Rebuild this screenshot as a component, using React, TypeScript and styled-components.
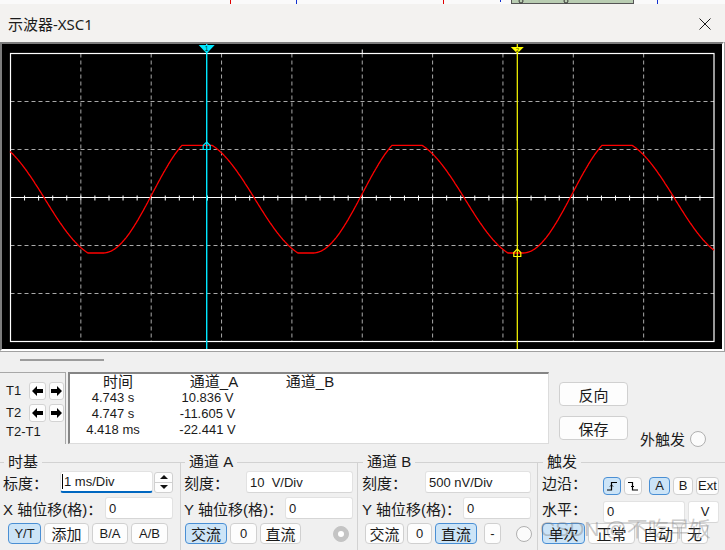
import React from 'react';
import styled, { createGlobalStyle } from 'styled-components';

const ui = `"Liberation Sans", "Noto Sans CJK SC", sans-serif`;

const GlobalStyle = createGlobalStyle`
  html, body {
    margin: 0;
    padding: 0;
    background: #f0f0f0;
  }
  body {
    font-family: ${ui};
    color: #1a1a1a;
  }
`;

const Page = styled.div`
  position: relative;
  width: 725px;
  height: 550px;
  overflow: hidden;
  display: flex;
  flex-direction: column;
  background: #f0f0f0;
`;

const StripSvg = styled.svg`
  display: block;
  flex-shrink: 0;
`;

const TitleBar = styled.div`
  height: 38px;
  flex-shrink: 0;
  display: flex;
  align-items: center;
  justify-content: space-between;
  padding: 0 14px 0 8px;
  background: #f3f2f0;
`;

const Title = styled.span`
  font-family: "Noto Sans", "Noto Sans CJK SC", sans-serif;
  font-size: 15px;
  color: #1b1b1b;
`;

const CloseSvg = styled.svg`
  display: block;
  margin-top: 2px;
`;

const ScopeOuter = styled.div`
  flex-shrink: 0;
  border-right: 1px solid #a0a0a0;
  border-bottom: 1px solid #a0a0a0;
`;

const ScopeInner = styled.div`
  height: 305px;
  border: 2px solid;
  border-color: #7c7c7c #ffffff #ffffff #7c7c7c;
  background: #000;
`;

const ScopeSvg = styled.svg`
  display: block;
`;

const Panel = styled.div`
  flex: 1;
  display: flex;
  flex-direction: column;
`;

const ScrollRow = styled.div`
  height: 20px;
  box-sizing: border-box;
  padding: 7px 0 0 20px;
`;

const ScrollThumb = styled.div`
  width: 84px;
  height: 2px;
  background: #9c9c9c;
`;

const CursorRow = styled.div`
  height: 72px;
  display: flex;
`;

const CursorKeys = styled.div`
  width: 66px;
  box-sizing: border-box;
  border-top: 1px solid #a8a8a8;
  border-right: 1px solid #a8a8a8;
  padding: 9px 0 0 6px;
  display: grid;
  grid-template-columns: 20px 17px 15px;
  grid-template-rows: 18px 17px 14px;
  column-gap: 3px;
  row-gap: 4px;
  align-items: center;
`;

const KeyLabel = styled.span<{ $span?: boolean }>`
  font-size: 13px;
  line-height: 14px;
  white-space: nowrap;
  grid-column: ${(p) => (p.$span ? '1 / -1' : 'auto')};
`;

const KeyButton = styled.button`
  height: 18px;
  padding: 0;
  box-sizing: border-box;
  border: 1px solid #d3d3d3;
  border-radius: 3px;
  background: #fdfdfd;
  display: flex;
  align-items: center;
  justify-content: center;
`;

const Readout = styled.div`
  width: 481px;
  margin-left: 2px;
  box-sizing: border-box;
  border-style: solid;
  border-width: 2px 1px 1px 2px;
  border-color: #858585 #dcdcdc #dcdcdc #858585;
  background: #fff;
  display: grid;
  grid-template-columns: 96px 96px 96px;
  grid-auto-rows: 16px;
  align-content: start;
`;

const HeadCell = styled.div`
  font-size: 15px;
  line-height: 16px;
  text-align: center;
  white-space: nowrap;
`;

const ValueCell = styled.div<{ $pr: number }>`
  font-size: 13px;
  line-height: 16px;
  text-align: center;
  padding-right: ${(p) => p.$pr}px;
  white-space: nowrap;
`;

const SideButtons = styled.div`
  margin-left: 10px;
  padding-top: 10px;
  display: flex;
  flex-direction: column;
  gap: 10px;
`;

const ExtTrigger = styled.div`
  margin-left: 12px;
  margin-bottom: -5px;
  align-self: flex-end;
  display: flex;
  align-items: center;
  gap: 5px;
  font-size: 15px;
`;

const Groups = styled.div`
  display: flex;
  margin-top: 9px;
  margin-left: -1px;
  height: 110px;
`;

const Group = styled.fieldset<{ $w: number; $pl: number }>`
  width: ${(p) => p.$w}px;
  flex-shrink: 0;
  min-width: 0;
  box-sizing: border-box;
  margin: 0;
  padding: 0 0 0 ${(p) => p.$pl}px;
  border: none;
  border-top: 1px solid #d2d2d2;
  border-left: 1px solid #d2d2d2;
`;

const Legend = styled.legend`
  font-size: 15px;
  line-height: 18px;
  padding: 0 4px;
  margin-left: 1px;
`;

const FormRow = styled.div`
  display: flex;
  align-items: center;
  height: 22px;
  margin-bottom: 4px;
`;

const Label = styled.span<{ $w: number }>`
  width: ${(p) => p.$w}px;
  flex-shrink: 0;
  font-size: 15px;
  white-space: nowrap;
`;

const Field = styled.div<{ $w: number; $focused?: boolean; $center?: boolean }>`
  width: ${(p) => p.$w}px;
  height: 22px;
  flex-shrink: 0;
  box-sizing: border-box;
  background: #fff;
  border: 1px solid #e2e2e2;
  border-bottom: ${(p) => (p.$focused ? '2px solid #0067c0' : '1px solid #d6d6d6')};
  border-radius: 3px;
  padding-left: ${(p) => (p.$focused ? 1 : 3)}px;
  font-size: 13px;
  display: flex;
  align-items: center;
  justify-content: ${(p) => (p.$center ? 'center' : 'flex-start')};
  white-space: pre;
`;

const Caret = styled.span`
  width: 1px;
  height: 15px;
  margin-right: 1px;
  background: #000;
`;

const Spinner = styled.div`
  margin-left: 1px;
  width: 19px;
  height: 21px;
  box-sizing: border-box;
  border: 1px solid #d0d0d0;
  border-radius: 3px;
  background: #fdfdfd;
  display: flex;
  flex-direction: column;
`;

const SpinHalf = styled.div<{ $down?: boolean }>`
  flex: 1;
  display: flex;
  align-items: center;
  justify-content: center;
  border-top: ${(p) => (p.$down ? '1px solid #d0d0d0' : 'none')};
`;

const Tri = styled.span<{ $down?: boolean }>`
  width: 0;
  height: 0;
  border-left: 4px solid transparent;
  border-right: 4px solid transparent;
  border-top: ${(p) => (p.$down ? '4px solid #111' : 'none')};
  border-bottom: ${(p) => (p.$down ? 'none' : '4px solid #111')};
`;

const ButtonRow = styled.div<{ $pl: number }>`
  display: flex;
  align-items: center;
  gap: 3px;
  height: 21px;
  margin-top: 2px;
  padding-left: ${(p) => p.$pl}px;
`;

const Btn = styled.button<{ $w: number; $h?: number; $active?: boolean; $small?: boolean; $ml?: number }>`
  width: ${(p) => p.$w}px;
  height: ${(p) => p.$h ?? 21}px;
  flex-shrink: 0;
  margin-left: ${(p) => p.$ml ?? 0}px;
  padding: 0;
  box-sizing: border-box;
  border: 1px solid ${(p) => (p.$active ? '#4a8fd4' : '#d0d0d0')};
  background: ${(p) => (p.$active ? '#cce4f7' : '#fdfdfd')};
  border-radius: 4px;
  font-family: ${ui};
  font-size: ${(p) => (p.$small ? 13 : 15)}px;
  color: #1a1a1a;
  display: flex;
  align-items: center;
  justify-content: center;
  white-space: nowrap;
`;

const Radio = styled.span<{ $disabled?: boolean; $ml?: number }>`
  width: 16px;
  height: 16px;
  flex-shrink: 0;
  margin-left: ${(p) => p.$ml ?? 0}px;
  box-sizing: border-box;
  border-radius: 50%;
  border: 1px solid ${(p) => (p.$disabled ? '#c4c4c4' : '#b0b0b0')};
  background: ${(p) => (p.$disabled ? '#c4c4c4' : '#fbfbfb')};
  display: flex;
  align-items: center;
  justify-content: center;
  &::after {
    content: '';
    width: 6px;
    height: 6px;
    border-radius: 50%;
    background: ${(p) => (p.$disabled ? '#fff' : 'transparent')};
  }
`;

const Shifted = styled.div`
  display: flex;
  align-items: center;
  gap: 3px;
  margin-top: 7px;
`;

const Watermark = styled.div`
  position: absolute;
  left: 540px;
  top: 516px;
  font-size: 21px;
  line-height: 26px;
  color: rgba(120, 120, 120, 0.4);
  white-space: nowrap;
  pointer-events: none;
`;

// plot geometry inside the black canvas (canvas starts at page x=2, y=44)
const CW = 720;
const CH = 305;
const PX = 8.5;
const PY = 9.5;
const PW = 703.5;
const PH = 288;
const MID_Y = PY + PH / 2;

// one period of the clipped, slightly skewed signal (page px, 210 px per period)
function signal(x: number) {
  const p = ((((x - 88) % 210) + 210) % 210);
  const lo = -55.3;
  const hi = 52.4;
  const span = hi - lo;
  if (p < 15) return lo;
  if (p < 94) {
    const u = (p - 15) / 79;
    return lo + (span * (1 - Math.cos(0.8 * Math.PI * u))) / (1 - Math.cos(0.8 * Math.PI));
  }
  if (p < 124) return hi;
  const u = (p - 124) / 86;
  return hi - span * (0.5 * u + 0.25 * (1 - Math.cos(Math.PI * u)));
}

function wavePath() {
  const pts: string[] = [];
  for (let x = 10; x <= 714; x += 0.5) {
    pts.push(`${(x - 2).toFixed(1)},${(153.7 - signal(x)).toFixed(1)}`);
  }
  return 'M' + pts.join(' L');
}

function marker(cx: number, cy: number) {
  return `M${cx - 3.5},${cy + 3.5} V${cy - 0.5} L${cx},${cy - 4} L${cx + 3.5},${cy - 0.5} V${cy + 3.5} Z`;
}

function Scope() {
  const vLines = Array.from({ length: 9 }, (_, i) => PX + ((i + 1) * PW) / 10);
  const hLines = [1, 2, 4, 5].map((j) => PY + j * (PH / 6));
  const ticks = Array.from({ length: 49 }, (_, k) => PX + ((k + 1) * PW) / 50);
  const t1 = 204.7;
  const t2 = 515.3;
  return (
    <ScopeSvg width={CW} height={CH} viewBox={`0 0 ${CW} ${CH}`}>
      {vLines.map((x) => (
        <line key={`v${x}`} x1={x} y1={PY} x2={x} y2={PY + PH} stroke="#a9a9a9" strokeDasharray="4 3" />
      ))}
      {hLines.map((y) => (
        <line key={`h${y}`} x1={PX} y1={y} x2={PX + PW} y2={y} stroke="#a9a9a9" strokeDasharray="4 3" />
      ))}
      <line x1={PX} y1={MID_Y} x2={PX + PW} y2={MID_Y} stroke="#fff" strokeWidth="1.2" />
      {ticks.map((x) => (
        <line key={`t${x}`} x1={x} y1={MID_Y - 2} x2={x} y2={MID_Y + 3} stroke="#fff" />
      ))}
      <line x1={PX + PW / 2} y1={PY - 4} x2={PX + PW / 2} y2={PY} stroke="#fff" />
      <rect x={PX} y={PY} width={PW} height={PH} fill="none" stroke="#fff" strokeWidth="1.2" />
      <path d={wavePath()} fill="none" stroke="#ff0000" strokeWidth="1.3" />
      <line x1={t1} y1="0" x2={t1} y2={CH} stroke="#00e8ff" strokeWidth="1.4" />
      <line x1={t2} y1="0" x2={t2} y2={CH} stroke="#ffff00" strokeWidth="1.2" />
      <path d={marker(t1, 102)} fill="none" stroke="#00e8ff" strokeWidth="1.2" />
      <path d={marker(t2, 209)} fill="none" stroke="#ffff00" strokeWidth="1.2" />
      <polygon points={`${t1 - 8},1 ${t1 + 8},1 ${t1},9.5`} fill="#00e8ff" />
      <text x={t1} y="7" fontSize="7" textAnchor="middle" fill="#003040" fontFamily="Liberation Sans">1</text>
      <polygon points={`${t2 - 6.5},3 ${t2 + 6.5},3 ${t2},9.5`} fill="#ffff00" />
      <text x={t2} y="8" fontSize="6" textAnchor="middle" fill="#404000" fontFamily="Liberation Sans">2</text>
    </ScopeSvg>
  );
}

function Arrow({ right }: { right?: boolean }) {
  return (
    <svg width="11" height="10" viewBox="0 0 11 10">
      <path d={right ? 'M11 5 L6 0 V3 H0 V7 H6 V10 Z' : 'M0 5 L5 0 V3 H11 V7 H5 V10 Z'} fill="#000" />
    </svg>
  );
}

function EdgeIcon({ falling }: { falling?: boolean }) {
  return (
    <svg width="12" height="12" viewBox="0 0 12 12">
      <path d={falling ? 'M1 2.5 H5.5 V10 H11' : 'M1 10 H5.5 V2.5 H11'} fill="none" stroke="#000" strokeWidth="1.2" />
      <path d={falling ? 'M4 6 L5.5 7.5 L7 6' : 'M4 6.5 L5.5 5 L7 6.5'} fill="none" stroke="#000" strokeWidth="1" />
    </svg>
  );
}

const readings = [
  ['4.743 s', '10.836 V'],
  ['4.747 s', '-11.605 V'],
  ['4.418 ms', '-22.441 V'],
];

export default function App() {
  return (
    <>
      <GlobalStyle />
      <Page>
        <StripSvg width="725" height="4" viewBox="0 0 725 4">
          <rect width="725" height="4" fill="#fafafa" />
          <line x1="230.5" y1="0" x2="230.5" y2="4" stroke="#e00000" />
          <line x1="296.5" y1="0" x2="296.5" y2="4" stroke="#1030d0" />
          <line x1="443.5" y1="0" x2="443.5" y2="4" stroke="#e00000" />
          <line x1="500.5" y1="0" x2="500.5" y2="2" stroke="#1030d0" />
          <rect x="511.5" y="-1" width="122" height="4.5" fill="#b9cdb2" stroke="#555" />
          <circle cx="521" cy="1" r="2" fill="none" stroke="#333" />
          <circle cx="566" cy="1" r="2" fill="none" stroke="#333" />
          <line x1="657.5" y1="0" x2="657.5" y2="4" stroke="#1030d0" />
        </StripSvg>

        <TitleBar>
          <Title>示波器-XSC1</Title>
          <CloseSvg width="12" height="12" viewBox="0 0 12 12">
            <path d="M0.5 0.5 L11.5 11.5 M11.5 0.5 L0.5 11.5" stroke="#1a1a1a" strokeWidth="1" />
          </CloseSvg>
        </TitleBar>

        <ScopeOuter>
          <ScopeInner>
            <Scope />
          </ScopeInner>
        </ScopeOuter>

        <Panel>
          <ScrollRow>
            <ScrollThumb />
          </ScrollRow>

          <CursorRow>
            <CursorKeys>
              <KeyLabel>T1</KeyLabel>
              <KeyButton><Arrow /></KeyButton>
              <KeyButton><Arrow right /></KeyButton>
              <KeyLabel>T2</KeyLabel>
              <KeyButton><Arrow /></KeyButton>
              <KeyButton><Arrow right /></KeyButton>
              <KeyLabel $span>T2-T1</KeyLabel>
            </CursorKeys>

            <Readout>
              <HeadCell>时间</HeadCell>
              <HeadCell>通道_A</HeadCell>
              <HeadCell>通道_B</HeadCell>
              {readings.map(([t, a]) => (
                <React.Fragment key={t}>
                  <ValueCell $pr={10}>{t}</ValueCell>
                  <ValueCell $pr={13}>{a}</ValueCell>
                  <ValueCell $pr={0} />
                </React.Fragment>
              ))}
            </Readout>

            <SideButtons>
              <Btn $w={69} $h={24}>反向</Btn>
              <Btn $w={69} $h={24}>保存</Btn>
            </SideButtons>

            <ExtTrigger>
              外触发
              <Radio />
            </ExtTrigger>
          </CursorRow>

          <Groups>
            <Group $w={181} $pl={3}>
              <Legend>时基</Legend>
              <FormRow>
                <Label $w={57}>标度：</Label>
                <Field $w={93} $focused>
                  <Caret />1 ms/Div
                </Field>
                <Spinner>
                  <SpinHalf><Tri /></SpinHalf>
                  <SpinHalf $down><Tri $down /></SpinHalf>
                </Spinner>
              </FormRow>
              <FormRow>
                <Label $w={102}>X 轴位移(格)：</Label>
                <Field $w={68}>0</Field>
              </FormRow>
              <ButtonRow $pl={5}>
                <Btn $w={33} $small $active>Y/T</Btn>
                <Btn $w={45}>添加</Btn>
                <Btn $w={36} $small>B/A</Btn>
                <Btn $w={37} $small>A/B</Btn>
              </ButtonRow>
            </Group>

            <Group $w={177} $pl={3}>
              <Legend>通道 A</Legend>
              <FormRow>
                <Label $w={62}>刻度：</Label>
                <Field $w={107}>10  V/Div</Field>
              </FormRow>
              <FormRow>
                <Label $w={101}>Y 轴位移(格)：</Label>
                <Field $w={68}>0</Field>
              </FormRow>
              <ButtonRow $pl={1}>
                <Btn $w={42} $active>交流</Btn>
                <Btn $w={27} $small>0</Btn>
                <Btn $w={41}>直流</Btn>
                <Radio $disabled $ml={29} />
              </ButtonRow>
            </Group>

            <Group $w={180} $pl={4}>
              <Legend>通道 B</Legend>
              <FormRow>
                <Label $w={63}>刻度：</Label>
                <Field $w={106}>500 nV/Div</Field>
              </FormRow>
              <FormRow>
                <Label $w={101}>Y 轴位移(格)：</Label>
                <Field $w={68}>0</Field>
              </FormRow>
              <ButtonRow $pl={3}>
                <Btn $w={39}>交流</Btn>
                <Btn $w={25} $small>0</Btn>
                <Btn $w={42} $active>直流</Btn>
                <Btn $w={17} $small $ml={4}>-</Btn>
                <Radio $ml={12} />
              </ButtonRow>
            </Group>

            <Group $w={189} $pl={4}>
              <Legend>触发</Legend>
              <FormRow>
                <Label $w={61}>边沿：</Label>
                <Shifted>
                  <Btn $w={18} $h={18} $active><EdgeIcon /></Btn>
                  <Btn $w={18} $h={18}><EdgeIcon falling /></Btn>
                  <Btn $w={21} $h={18} $small $active $ml={4}>A</Btn>
                  <Btn $w={20} $h={18} $small>B</Btn>
                  <Btn $w={23} $h={18} $small>Ext</Btn>
                </Shifted>
              </FormRow>
              <FormRow>
                <Label $w={61}>水平：</Label>
                <Shifted>
                  <Field $w={82}>0</Field>
                  <Field $w={31} $center>V</Field>
                </Shifted>
              </FormRow>
              <ButtonRow $pl={0}>
                <Btn $w={43} $active>单次</Btn>
                <Btn $w={47}>正常</Btn>
                <Btn $w={40}>自动</Btn>
                <Btn $w={27}>无</Btn>
              </ButtonRow>
            </Group>
          </Groups>
        </Panel>

        <Watermark>CSDN @不吃早饭</Watermark>
      </Page>
    </>
  );
}
